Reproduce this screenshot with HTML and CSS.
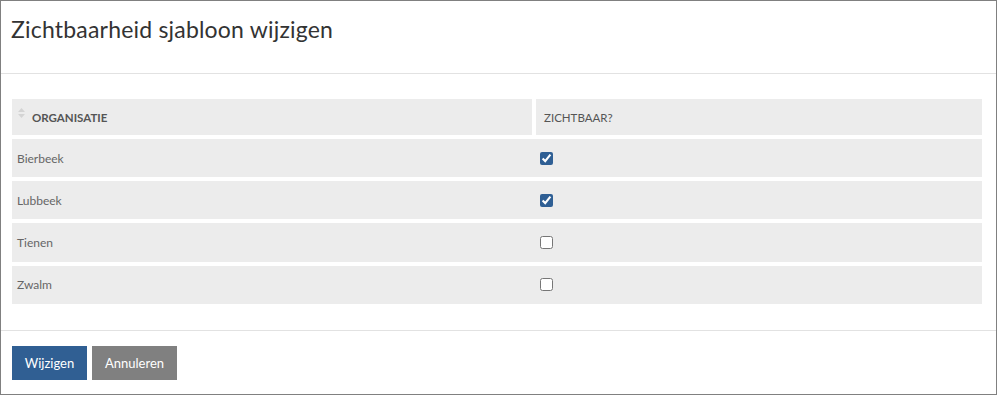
FILE: index.html
```html
<!DOCTYPE html>
<html lang="nl">
<head>
<meta charset="utf-8">
<title>Zichtbaarheid sjabloon wijzigen</title>
<link rel="stylesheet" href="styles.css">
</head>
<body>
<div class="modal">
  <div class="modal-header">
    <h1 class="modal-title">Zichtbaarheid sjabloon wijzigen</h1>
  </div>
  <div class="modal-body">
    <table class="grid">
      <thead>
        <tr>
          <th class="col-org"><span class="sort"><svg width="7" height="10" viewBox="0 0 7 10"><path d="M3.5 0 L7 4 H0 Z" fill="#d4d4d4"/><path d="M0 6 H7 L3.5 10 Z" fill="#d4d4d4"/></svg></span>ORGANISATIE</th>
          <th class="col-vis">ZICHTBAAR?</th>
        </tr>
      </thead>
      <tbody>
        <tr><td class="org">Bierbeek</td><td class="cb"><input type="checkbox" checked></td></tr>
        <tr><td class="org">Lubbeek</td><td class="cb"><input type="checkbox" checked></td></tr>
        <tr><td class="org">Tienen</td><td class="cb"><input type="checkbox"></td></tr>
        <tr><td class="org">Zwalm</td><td class="cb"><input type="checkbox"></td></tr>
      </tbody>
    </table>
  </div>
  <div class="modal-footer">
    <button class="btn btn-primary">Wijzigen</button>
    <button class="btn btn-secondary">Annuleren</button>
  </div>
</div>
</body>
</html>
```
FILE: styles.css
```css
html, body {
  margin: 0;
  padding: 0;
  background: #fff;
}
body {
  font-family: Lato, "Open Sans", sans-serif;
  color: #333;
}
.modal {
  box-sizing: border-box;
  width: 997px;
  height: 395px;
  border: 1px solid #808080;
  display: flex;
  flex-direction: column;
}
.modal-header {
  box-sizing: border-box;
  flex-shrink: 0;
  height: 73px;
  border-bottom: 1px solid #e2e2e2;
  padding: 0 11px 0 10px;
  display: flex;
  align-items: center;
}
.modal-title {
  margin: 0 0 17px 0;
  font-weight: 400;
  font-size: 23px;
  color: #333;
  letter-spacing: 0.2px;
}
.modal-body {
  flex-shrink: 0;
  padding: 25px 14px 26px 11px;
  border-bottom: 1px solid #e2e2e2;
}
.grid {
  border-collapse: separate;
  border-spacing: 0 4px;
  margin: -4px 0;
  width: 100%;
  font-size: 12px;
}
.grid th {
  background: #ececec;
  height: 36px;
  padding: 0 8px;
  text-align: left;
  font-weight: 700;
  color: #555;
  font-size: 11.5px;
  box-sizing: border-box;
}
.grid th.col-org {
  width: 524px;
  padding-left: 6px;
  border-right: 4px solid #fff;
}
.grid th.col-vis {
  font-weight: 400;
  color: #555;
}
.sort {
  display: inline-block;
  vertical-align: top;
  margin: -4px 7px 0 0;
}
.grid td {
  background: #ececec;
  height: 38px;
  padding: 0 5px;
  color: #666;
  box-sizing: border-box;
}
.grid tbody tr:nth-child(n+3) td {
  height: 38.5px;
}
.grid td.cb {
  padding: 0 4px;
}
.grid input[type="checkbox"] {
  display: block;
  width: 13px;
  height: 13px;
  margin: 0;
  accent-color: #2f5f94;
}
.modal-footer {
  padding: 15px 11px;
  display: flex;
  gap: 5px;
}
.btn {
  border: 0;
  height: 34px;
  padding: 0 10px;
  font-family: Lato, "Open Sans", sans-serif;
  font-size: 13px;
  color: #fff;
  cursor: pointer;
}
.btn-primary {
  background: #305f93;
  width: 75px;
}
.btn-secondary {
  background: #808080;
  width: 85px;
}
```
